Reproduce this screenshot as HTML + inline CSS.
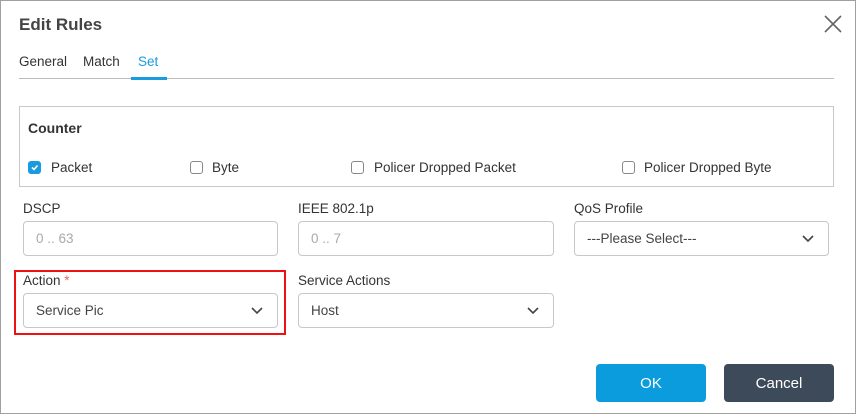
<!DOCTYPE html>
<html><head><style>
*{box-sizing:border-box;margin:0;padding:0}
body{width:856px;height:414px;background:#fff;font-family:"Liberation Sans",sans-serif;color:#333;position:relative;overflow:hidden;font-size:13.5px}
.frame{position:absolute;left:0;top:0;width:856px;height:414px;border:1px solid #a0a0a0}
.a{position:absolute;white-space:nowrap}
.inp{position:absolute;border:1px solid #c4c8cc;border-radius:4px;height:35px;background:#fff}
.inp span{position:absolute;left:12px;top:9px;font-size:13.5px}
.chev{position:absolute;right:14px;top:13px}
.cb{position:absolute;width:13px;height:13px;border:1px solid #888;border-radius:3px;background:#fff}
.lbl{position:absolute;font-size:13.5px;color:#333}
</style></head><body>
<div class="frame"></div>
<div class="a" style="left:19px;top:15px;font-size:17px;font-weight:bold;color:#444">Edit Rules</div>
<svg class="a" style="left:824px;top:15px" width="18" height="18" viewBox="0 0 18 18"><path d="M1 1L17 17M17 1L1 17" stroke="#666" stroke-width="1.6"/></svg>
<div class="a" style="left:19px;top:54px;font-size:13.5px">General</div>
<div class="a" style="left:83px;top:54px;font-size:13.5px">Match</div>
<div class="a" style="left:138px;top:54px;font-size:13.5px;color:#1a9be0">Set</div>
<div class="a" style="left:19px;top:78px;width:815px;height:1px;background:#bbb"></div>
<div class="a" style="left:131px;top:77px;width:36px;height:3px;background:#1a9be0"></div>
<div class="a" style="left:19px;top:106px;width:815px;height:81px;border:1px solid #c8c8c8"></div>
<div class="a" style="left:28px;top:120px;font-size:14px;font-weight:bold;color:#333">Counter</div>
<div class="cb" style="left:28px;top:161px;background:#1a9be0;border-color:#1a9be0"><svg width="11" height="11" viewBox="0 0 11 11" style="position:absolute;left:0;top:0"><path d="M3 5.5L5 7.5L8.5 3.5" stroke="#fff" stroke-width="1.6" fill="none"/></svg></div>
<div class="lbl" style="left:51px;top:160px">Packet</div>
<div class="cb" style="left:190px;top:161px"></div>
<div class="lbl" style="left:212px;top:160px">Byte</div>
<div class="cb" style="left:351px;top:161px"></div>
<div class="lbl" style="left:374px;top:160px">Policer Dropped Packet</div>
<div class="cb" style="left:622px;top:161px"></div>
<div class="lbl" style="left:644px;top:160px">Policer Dropped Byte</div>
<div class="lbl" style="left:23px;top:201px">DSCP</div>
<div class="inp" style="left:23px;top:221px;width:255px"><span style="color:#aaa">0 .. 63</span></div>
<div class="lbl" style="left:298px;top:201px">IEEE 802.1p</div>
<div class="inp" style="left:298px;top:221px;width:256px"><span style="color:#aaa">0 .. 7</span></div>
<div class="lbl" style="left:574px;top:201px">QoS Profile</div>
<div class="inp" style="left:574px;top:221px;width:255px"><span style="color:#444">---Please Select---</span><svg class="chev" width="12" height="8" viewBox="0 0 12 8"><path d="M1 1L6 6L11 1" stroke="#444" stroke-width="1.6" fill="none"/></svg></div>
<div class="a" style="left:14px;top:270px;width:272px;height:65px;border:2px solid #ee1111"></div>
<div class="lbl" style="left:23px;top:273px">Action <span style="color:#e66">*</span></div>
<div class="inp" style="left:23px;top:293px;width:255px"><span style="color:#444">Service Pic</span><svg class="chev" width="12" height="8" viewBox="0 0 12 8"><path d="M1 1L6 6L11 1" stroke="#444" stroke-width="1.6" fill="none"/></svg></div>
<div class="lbl" style="left:298px;top:273px">Service Actions</div>
<div class="inp" style="left:298px;top:293px;width:256px"><span style="color:#444">Host</span><svg class="chev" width="12" height="8" viewBox="0 0 12 8"><path d="M1 1L6 6L11 1" stroke="#444" stroke-width="1.6" fill="none"/></svg></div>
<div class="a" style="left:596px;top:364px;width:110px;height:38px;background:#0a9cdc;border-radius:4px;color:#fff;font-size:15px;text-align:center;line-height:40px">OK</div>
<div class="a" style="left:724px;top:364px;width:110px;height:38px;background:#3d4a5a;border-radius:4px;color:#fff;font-size:15px;text-align:center;line-height:40px">Cancel</div>
</body></html>
